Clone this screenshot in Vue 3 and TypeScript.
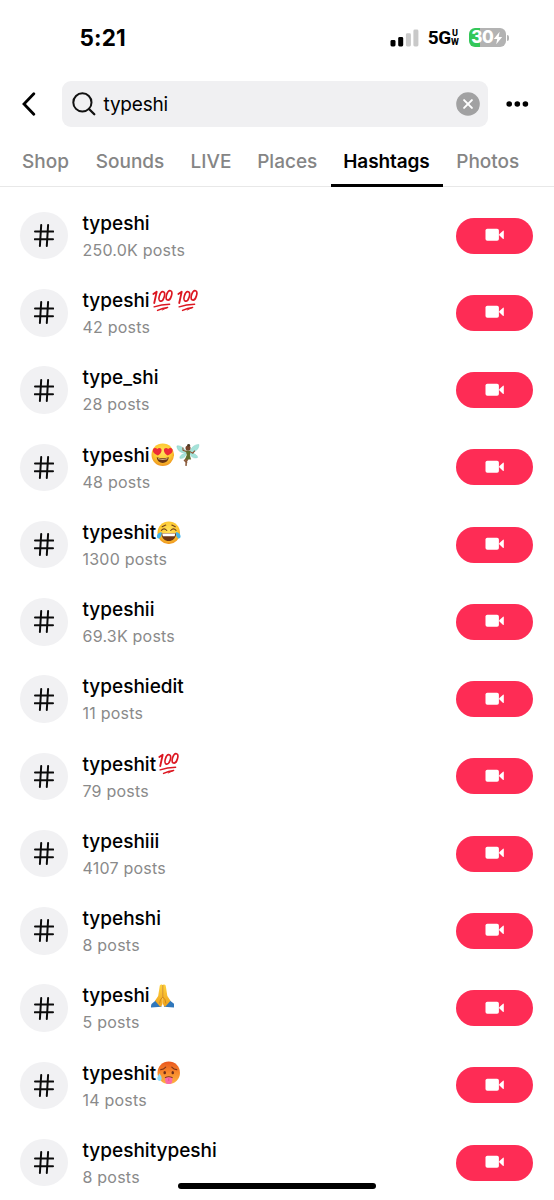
<script setup lang="ts">
type EmojiName = 'hundred' | 'heartEyes' | 'fairy' | 'joy' | 'pray' | 'hot'

interface Hashtag {
  name: string
  posts: string
  emoji?: EmojiName[]
}

const tabs: string[] = ['Shop', 'Sounds', 'LIVE', 'Places', 'Hashtags', 'Photos']
const activeTab = 'Hashtags'

const hashtags: Hashtag[] = [
  { name: 'typeshi', posts: '250.0K posts' },
  { name: 'typeshi', posts: '42 posts', emoji: ['hundred', 'hundred'] },
  { name: 'type_shi', posts: '28 posts' },
  { name: 'typeshi', posts: '48 posts', emoji: ['heartEyes', 'fairy'] },
  { name: 'typeshit', posts: '1300 posts', emoji: ['joy'] },
  { name: 'typeshii', posts: '69.3K posts' },
  { name: 'typeshiedit', posts: '11 posts' },
  { name: 'typeshit', posts: '79 posts', emoji: ['hundred'] },
  { name: 'typeshiii', posts: '4107 posts' },
  { name: 'typehshi', posts: '8 posts' },
  { name: 'typeshi', posts: '5 posts', emoji: ['pray'] },
  { name: 'typeshit', posts: '14 posts', emoji: ['hot'] },
  { name: 'typeshitypeshi', posts: '8 posts' },
]
</script>

<template>
  <main class="screen">
    <svg class="defs" width="0" height="0" aria-hidden="true">
      <defs>
        <radialGradient id="face" cx="50%" cy="38%" r="62%">
          <stop offset="0" stop-color="#ffe45c" />
          <stop offset="0.65" stop-color="#fdc62f" />
          <stop offset="1" stop-color="#ee9420" />
        </radialGradient>
        <linearGradient id="heat" x1="0" y1="0" x2="0" y2="1">
          <stop offset="0" stop-color="#e9561f" />
          <stop offset="0.5" stop-color="#f88a2c" />
          <stop offset="1" stop-color="#fcb444" />
        </linearGradient>
        <linearGradient id="hand" x1="0" y1="0" x2="0" y2="1">
          <stop offset="0" stop-color="#ffd23e" />
          <stop offset="1" stop-color="#efa21d" />
        </linearGradient>
      </defs>
    </svg>

    <header class="status">
      <span class="time">5:21</span>
      <div class="indicators">
        <svg class="signal" viewBox="0 0 29 18">
          <rect x="0.5" y="11" width="5" height="6.5" rx="1.4" fill="#000" />
          <rect x="8.2" y="8" width="5" height="9.5" rx="1.4" fill="#000" />
          <rect x="15.9" y="4.3" width="5" height="13.2" rx="1.4" fill="#c9c9c9" />
          <rect x="23.4" y="0.5" width="5" height="17" rx="1.4" fill="#c9c9c9" />
        </svg>
        <span class="network">5G</span>
        <span class="band"><span>U</span><span>W</span></span>
        <div class="battery">
          <div class="cell">
            <span class="charge">30</span>
            <svg class="bolt" viewBox="0 0 10 14">
              <path d="M6.6 0.8 0.8 8h3.4L3.2 13.2 9.2 5.9H5.7Z" fill="#fff" />
            </svg>
          </div>
          <div class="nub"></div>
        </div>
      </div>
    </header>

    <section class="search">
      <svg class="back" viewBox="0 0 16 24">
        <path d="M12.8 1.8 3 12l9.8 10.2" fill="none" stroke="#000" stroke-width="2.8" stroke-linecap="round" />
      </svg>
      <div class="field">
        <svg class="lens" viewBox="0 0 24 24">
          <circle cx="10.4" cy="10.4" r="9.1" fill="none" stroke="#111" stroke-width="2" />
          <path d="m17 17 5.3 5.3" stroke="#111" stroke-width="2.3" stroke-linecap="round" />
        </svg>
        <span class="query">typeshi</span>
        <svg class="clear" viewBox="0 0 24 24">
          <circle cx="12" cy="12" r="11.8" fill="#a1a1a2" />
          <path d="m8.1 8.1 7.8 7.8m0-7.8-7.8 7.8" stroke="#fff" stroke-width="2" stroke-linecap="round" />
        </svg>
      </div>
      <svg class="more" viewBox="0 0 24 6">
        <circle cx="3.2" cy="3" r="2.8" /><circle cx="11.3" cy="3" r="2.8" /><circle cx="19.4" cy="3" r="2.8" />
      </svg>
    </section>

    <nav class="tabs">
      <span v-for="tab in tabs" :key="tab" class="tab" :class="{ active: tab === activeTab }">{{ tab }}</span>
    </nav>

    <ul class="results">
      <li v-for="(tag, i) in hashtags" :key="i" class="row">
        <span class="avatar">
          <svg class="hash" viewBox="0 0 20 23">
            <path d="M7.2 1 5.9 22M14.1 1l-1.3 21M1 7.5h18.2M.8 15.2H19" fill="none" stroke="#0b0b0b" stroke-width="2" stroke-linecap="round" />
          </svg>
        </span>
        <div class="text">
          <div class="title">
            <span class="name">{{ tag.name }}</span>
            <template v-for="(emoji, n) in tag.emoji ?? []" :key="n">
              <svg v-if="emoji === 'hundred'" class="emoji" viewBox="0 0 24 24">
                <g fill="none" stroke="#dc1721" stroke-linecap="round" stroke-linejoin="round">
                  <path d="M2.4 5.2 5.8 2.9 3.3 14.3" stroke-width="1.9" />
                  <ellipse cx="11" cy="7.6" rx="2.5" ry="5" transform="rotate(18 11 7.6)" stroke-width="1.7" />
                  <ellipse cx="18.4" cy="6.5" rx="2.5" ry="5" transform="rotate(18 18.4 6.5)" stroke-width="1.7" />
                  <path d="M3.2 18.2Q10.5 15.6 19 15.6M6.7 21.9Q12 19.2 17 18.8" stroke-width="1.5" />
                  <path d="m17 18.8-5.5 2.6" stroke-width="1" />
                </g>
              </svg>
              <svg v-else-if="emoji === 'heartEyes'" class="emoji" viewBox="0 0 24 24">
                <circle cx="12" cy="12" r="11.5" fill="url(#face)" />
                <path d="M7 12.8C3.4 11.2 1.5 9.2 2 6.9 2.5 4.7 5.2 4.3 6.4 6.2 8 4.4 10.8 5 10.8 7.3 10.8 9.4 9.2 11.4 7 12.8Z" fill="#ed2b37" />
                <path d="M17 12.8c3.6-1.6 5.5-3.6 5-5.9-.5-2.2-3.2-2.6-4.4-.7-1.6-1.8-4.4-1.2-4.4 1.1 0 2.1 1.6 4.1 3.8 5.5Z" fill="#ed2b37" />
                <path d="M5.8 14.6Q12 16.6 18.2 14.6C17.7 18.5 15.2 20.3 12 20.3S6.3 18.5 5.8 14.6Z" fill="#6b3514" />
                <path d="M7 15.5q5 1.5 10 0l-.5 1q-4.5 1-9 0Z" fill="#f7dfae" />
              </svg>
              <svg v-else-if="emoji === 'fairy'" class="emoji" viewBox="0 0 24 24">
                <g fill="#a5e2d8" stroke="#7cc9c0" stroke-width=".4">
                  <path d="M11.2 9.8C8.7 5.1 3.8 1.8.9 3c0 4.8 4.8 8 10.3 6.8Z" />
                  <path d="M13.2 9.8C15 4.8 19.7 1 23.4 1.5c.4 4.8-4.4 8.8-10.2 8.3Z" />
                  <path d="M10.7 10.2C6.5 10.8 3.2 13.4 4 15.7c3.3.6 6.2-1.5 6.7-5.5Z" />
                  <path d="M14.1 10.3c4.3-.1 7.8 1.8 8 4.5-3.8 1.5-7.3-.4-8-4.5Z" />
                </g>
                <path d="m12 15.2-3.2 2.6 2.4 2.8M12.5 15.5l-2 3.4-.3 4.5" fill="none" stroke="#8a5a3a" stroke-width="1.6" />
                <path d="m9.9 7.7 4.8.3-.5 4.6 1.2 4.3-6.2-.3 1.8-4.3Z" fill="#5f6e2d" />
                <path d="M10.4 8.6 7.2 7.4 7 4.6M14.3 8.8l2.9 1.6 2-2.6" fill="none" stroke="#8d5534" stroke-width="1.1" />
                <circle cx="12.3" cy="5.2" r="2.6" fill="#75462c" />
                <circle cx="12.9" cy="2.4" r="1.5" fill="#4b3823" />
              </svg>
              <svg v-else-if="emoji === 'joy'" class="emoji" viewBox="0 0 24 24">
                <circle cx="12" cy="12" r="11.5" fill="url(#face)" />
                <path d="M4.5 9.6Q7.2 6.5 10 9.7M14 9.7q2.8-3.2 5.5-.1M5.3 5.8l3.6-1.6M18.7 5.8l-3.6-1.6" fill="none" stroke="#71401a" stroke-width="1.1" stroke-linecap="round" />
                <path d="M4.3 12.5h15.4C19.3 17.7 16 20.5 12 20.5S4.7 17.7 4.3 12.5Z" fill="#6b3514" />
                <path d="M5.3 12.8h13.4l-.7 2.9H6Z" fill="#fff" />
                <path d="M4.7 11.3C1.5 11.6-1.1 14.4.3 17.1c1.6 2.3 4.7-.7 4.4-5.8Z" fill="#43b5ec" />
                <path d="M19.3 11.3c3.2.3 5.8 3.1 4.4 5.8-1.6 2.3-4.7-.7-4.4-5.8Z" fill="#43b5ec" />
              </svg>
              <svg v-else-if="emoji === 'pray'" class="emoji" viewBox="0 0 24 24">
                <path d="M.5 20.3 5.7 16l5.3 7.3L-.4 24ZM23.5 20.3 18.3 16 13 23.3l11.4.7Z" fill="#3077bb" />
                <path d="M11.8 1C10.4-.2 8.9.8 8.8 2.7L7.3 12.2 4.1 17.1l5.3 6.1c2-.8 2.6-3 2.6-5.4Z" fill="url(#hand)" />
                <path d="M12.2 1c1.4-1.2 2.9-.2 3 1.7l1.5 9.5 3.2 4.9-5.3 6.1c-2-.8-2.6-3-2.6-5.4Z" fill="url(#hand)" />
                <path d="M12 1v12.5m-3.2 6.3Q9 15.5 12 13.3q3 2.2 3.2 6.5" fill="none" stroke="#c77b12" stroke-width=".8" />
              </svg>
              <svg v-else class="emoji" viewBox="0 0 24 24">
                <circle cx="12" cy="12" r="11.5" fill="url(#heat)" />
                <path d="M3.8 8.8Q6.8 8.6 8.9 6.2M20.2 8.8Q17.2 8.6 15.1 6.2" fill="none" stroke="#7d321a" stroke-width="1.1" stroke-linecap="round" />
                <ellipse cx="7.9" cy="11.9" rx="1.3" ry="1.7" fill="#6e2d1b" />
                <ellipse cx="16.1" cy="11.9" rx="1.3" ry="1.7" fill="#6e2d1b" />
                <path d="M8.6 17q3.4-1.4 6.8 0" fill="none" stroke="#7d321a" stroke-width="1.2" stroke-linecap="round" />
                <path d="M8.4 17.3q3.6-1.2 7.2 0v3c0 4.4-7.2 4.4-7.2 0Z" fill="#fa6ba8" />
                <path d="M12 17.7v2.6" stroke="#d8447f" stroke-width=".7" />
                <path d="M2.4 12.6c2 2.7 2.9 4.9 2 6.7-1.2 2-4.1.8-4.1-1.5 0-1.7 1.3-2.9 2.1-5.2Z" fill="#8fdaf8" />
              </svg>
            </template>
          </div>
          <div class="posts">{{ tag.posts }}</div>
        </div>
        <button class="record" type="button" aria-label="Record">
          <svg class="camera" viewBox="0 0 20 14">
            <rect x="0.5" y="0.8" width="13.4" height="12" rx="1.8" fill="#fff" />
            <path d="m14.2 6.3 3.9-3.6q.7-.5.7.3v7.6q0 .8-.7.3l-3.9-3.6Z" fill="#fff" />
          </svg>
        </button>
      </li>
    </ul>
    <div class="home"></div>
  </main>
</template>

<style>
body {
  margin: 0;
  background: #fff;
}
</style>

<style scoped>
.screen {
  position: relative;
  width: 554px;
  height: 1200px;
  overflow: hidden;
  background: #fff;
  color: #000;
  font-family: Inter, "Liberation Sans", sans-serif;
}
.defs {
  position: absolute;
}
.status {
  display: flex;
  align-items: center;
  justify-content: space-between;
  box-sizing: border-box;
  height: 75px;
  padding: 0 46px 0 79.5px;
}
.time {
  font-size: 22.5px;
  font-weight: 750;
  letter-spacing: 0.15px;
}
.indicators {
  display: flex;
  align-items: center;
}
.signal {
  width: 29px;
  height: 18px;
  margin-right: 8.5px;
}
.network {
  font-family: Roboto, sans-serif;
  font-size: 19px;
  font-weight: 700;
  line-height: 20px;
  letter-spacing: -0.3px;
}
.band {
  display: flex;
  flex-direction: column;
  width: 8px;
  margin-right: 9.5px;
  font-family: Roboto, sans-serif;
  font-size: 9px;
  font-weight: 800;
  line-height: 8.5px;
  text-align: center;
}
.battery {
  display: flex;
  align-items: center;
  gap: 1px;
  margin-right: -1px;
}
.cell {
  display: flex;
  align-items: center;
  justify-content: center;
  width: 37.5px;
  height: 19.5px;
  border-radius: 6px;
  background: linear-gradient(90deg, #34c759 0 31%, #b3b3b3 31%);
  color: #fff;
}
.charge {
  font-size: 17px;
  font-weight: 800;
  line-height: 19px;
  letter-spacing: -0.5px;
}
.bolt {
  width: 10px;
  height: 14px;
}
.nub {
  width: 2px;
  height: 6px;
  border-radius: 0 2px 2px 0;
  background: #b3b3b3;
}
.search {
  display: flex;
  align-items: center;
  height: 58px;
  padding-left: 20.5px;
}
.back {
  width: 16px;
  height: 24px;
  margin-right: 25.5px;
}
.field {
  display: flex;
  align-items: center;
  box-sizing: border-box;
  width: 426px;
  height: 46px;
  padding: 0 8px 0 10px;
  border-radius: 9px;
  background: #f0f0f2;
}
.lens {
  width: 24px;
  height: 24px;
}
.query {
  margin-left: 7.5px;
  padding-top: 1px;
  font-size: 19px;
  letter-spacing: -0.2px;
}
.clear {
  width: 24px;
  height: 24px;
  margin-left: auto;
}
.more {
  width: 24px;
  height: 6px;
  margin-left: 18px;
}
.tabs {
  display: grid;
  grid-template-columns: 73px 96px 66px 86.5px 112px 90.5px;
  height: 53px;
  padding-left: 9px;
  border-bottom: 1px solid #e8e8e8;
}
.tab {
  box-sizing: border-box;
  height: 54px;
  color: #858585;
  font-size: 19px;
  font-weight: 500;
  line-height: 57px;
  text-align: center;
  white-space: nowrap;
}
.tab.active {
  border-bottom: 3px solid #000;
  color: #000;
  font-weight: 600;
  letter-spacing: -0.1px;
}
.results {
  margin: 0;
  padding: 10px 0 0;
  list-style: none;
}
.row {
  display: flex;
  align-items: center;
  box-sizing: border-box;
  height: 77.25px;
  padding: 0 21px 0 20px;
}
.avatar {
  display: flex;
  align-items: center;
  justify-content: center;
  width: 47.5px;
  height: 47.5px;
  border-radius: 50%;
  background: #f1f1f3;
}
.hash {
  width: 20px;
  height: 23px;
}
.text {
  flex: 1;
  margin-left: 15px;
}
.title {
  display: flex;
  align-items: center;
  height: 27px;
  padding-top: 1.5px;
  font-size: 19px;
  font-weight: 500;
  line-height: 27px;
}
.emoji {
  width: 23.5px;
  height: 23.5px;
  margin: 0 1px;
}
.posts {
  height: 26px;
  color: #8a8a8a;
  font-size: 16px;
  line-height: 26px;
  letter-spacing: 0.22px;
}
.record {
  display: flex;
  align-items: center;
  justify-content: center;
  box-sizing: border-box;
  width: 77.5px;
  height: 36px;
  padding: 0 0 1px 2px;
  border: 0;
  border-radius: 18px;
  background: #fe2c55;
}
.camera {
  width: 20px;
  height: 14px;
}
.home {
  position: absolute;
  left: 178px;
  bottom: 11px;
  width: 198px;
  height: 6px;
  border-radius: 3px;
  background: #000;
}
</style>
